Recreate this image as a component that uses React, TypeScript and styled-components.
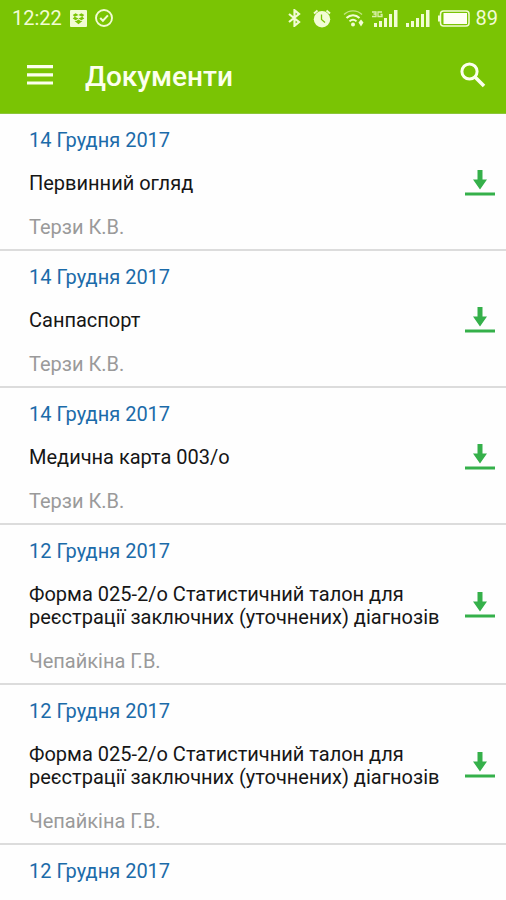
import React from "react";
import styled, { createGlobalStyle } from "styled-components";

const GlobalStyle = createGlobalStyle`
  *, *::before, *::after { box-sizing: border-box; }
  body {
    margin: 0;
    background: #fefefe;
    font-family: Roboto, "Noto Sans", sans-serif;
  }
`;

const Header = styled.header`
  background: #7ac404;
  color: #fcffee;
  border-bottom: 1px solid #8cc63a;
`;

const StatusBar = styled.div`
  display: flex;
  align-items: center;
  justify-content: space-between;
  height: 36px;
  padding: 0 8px 0 12px;
  color: #f2fcd4;
  font-size: 20px;
  line-height: 24px;
`;

const StatusGroup = styled.div<{ $gap: number }>`
  display: flex;
  align-items: center;
  gap: ${({ $gap }) => $gap}px;

  svg { display: block; flex: none; }
`;

const Toolbar = styled.div`
  display: flex;
  align-items: center;
  height: 77px;
  padding: 0 16px 0 22px;
`;

const IconButton = styled.button`
  display: flex;
  flex: none;
  padding: 4px;
  border: 0;
  background: none;
  color: inherit;
  cursor: pointer;
`;

const Title = styled.h1`
  flex: 1;
  margin: 0;
  padding: 4px 0 0 27px;
  font-size: 28px;
  font-weight: 500;
  line-height: 32px;
`;

const List = styled.ul`
  margin: 0;
  padding: 0;
  list-style: none;
`;

const Row = styled.li`
  display: flex;
  align-items: center;
  justify-content: space-between;
  padding: 14px 7px 10px 29px;
  border-bottom: 2px solid #dcdcdc;

  &:last-child { border-bottom: 0; }
`;

const Details = styled.div`
  display: flex;
  flex-direction: column;
  gap: 20px;
  max-width: 412px;
  font-size: 20px;
  line-height: 24px;
`;

const DateText = styled.time`
  color: #1b6ba9;
`;

const DocumentName = styled.span`
  color: #161616;
  line-height: 23px;
`;

const Author = styled.span`
  color: #9a9a9a;
`;

interface DocumentEntry {
  id: number;
  iso: string;
  date: string;
  name?: string;
  author?: string;
}

const formName =
  "Форма 025-2/о Статистичний талон для реєстрації заключних (уточнених) діагнозів";

const documents: DocumentEntry[] = [
  { id: 1, iso: "2017-12-14", date: "14 Грудня 2017", name: "Первинний огляд", author: "Терзи К.В." },
  { id: 2, iso: "2017-12-14", date: "14 Грудня 2017", name: "Санпаспорт", author: "Терзи К.В." },
  { id: 3, iso: "2017-12-14", date: "14 Грудня 2017", name: "Медична карта 003/о", author: "Терзи К.В." },
  { id: 4, iso: "2017-12-12", date: "12 Грудня 2017", name: formName, author: "Чепайкіна Г.В." },
  { id: 5, iso: "2017-12-12", date: "12 Грудня 2017", name: formName, author: "Чепайкіна Г.В." },
  { id: 6, iso: "2017-12-12", date: "12 Грудня 2017" },
];

const DropIcon = () => (
  <svg width="17" height="17" viewBox="0 0 17 17" aria-hidden="true">
    <rect width="17" height="17" rx="1" fill="currentColor" />
    <path
      d="M5.6 3.2 8.5 5l2.9-1.8 2.9 1.9-2 1.7 2 1.7-2.9 1.8-2.9-1.8-2.9 1.8-2.9-1.8 2-1.7-2-1.7z M8.5 5 4.8 6.8l3.7 1.8 3.7-1.8z"
      fill="#7ac404"
      fillRule="evenodd"
    />
    <path d="M4.6 11 8.5 14.2 12.4 11 10.8 11 8.5 9.6 6.2 11z" fill="#7ac404" />
  </svg>
);

const CheckIcon = () => (
  <svg width="18" height="18" viewBox="0 0 18 18" fill="none" stroke="currentColor" aria-hidden="true">
    <circle cx="9" cy="9" r="8" strokeWidth="1.9" />
    <path d="m5.2 9 2.7 2.8 5-5.4" strokeWidth="2" />
  </svg>
);

const BluetoothIcon = () => (
  <svg width="13" height="18" viewBox="0 0 13 18" fill="none" stroke="currentColor" strokeWidth="2.2" aria-hidden="true">
    <path d="m1 5 10 8-4.5 3.8V1.2L11 5 1 13" />
  </svg>
);

const AlarmIcon = () => (
  <svg width="18" height="19" viewBox="0 0 18 19" fill="none" aria-hidden="true">
    <circle cx="9" cy="10.2" r="8.2" fill="currentColor" />
    <path d="M1 4.5 4.5 1.6M17 4.5l-3.5-2.9" stroke="currentColor" strokeWidth="2" />
    <path d="M8.5 5.5v5l3.5 3" stroke="#7ac404" strokeWidth="1.3" />
  </svg>
);

const WifiIcon = () => (
  <svg width="21" height="18" viewBox="0 0 21 18" fill="none" stroke="currentColor" aria-hidden="true">
    <path d="M1 5.5c5-4.8 13-4.8 18 0" strokeWidth="1.4" opacity="0.6" />
    <path d="M3.5 9c3.8-3.8 9.2-3.8 13 0" strokeWidth="2" />
    <path d="M6.5 12.4c2.1-2 4.9-2 7 0" strokeWidth="2" />
    <circle cx="10" cy="15.4" r="2" fill="currentColor" stroke="none" />
    <path d="M18 10.5 20.5 13.5 18 17.5 15.5 13.5z" fill="currentColor" stroke="none" />
  </svg>
);

const SignalBars = () => (
  <path d="M0 14h3v4H0zM5 12h3v6H5zM10 9h3v9h-3zM15 5h3v13h-3zM20 1h3.5v17H20z" fill="currentColor" />
);

const NetworkIcon = () => (
  <svg width="26" height="18" viewBox="0 0 26 18" aria-hidden="true">
    <g transform="translate(2 0)">
      <SignalBars />
    </g>
    <path
      d="M0 3h4v2H1.5M4 5v2.5H0M10 3H6v4.5h4V5.5H8.5"
      fill="none"
      stroke="currentColor"
      strokeWidth="1.3"
      opacity="0.8"
    />
  </svg>
);

const SignalIcon = () => (
  <svg width="24" height="18" viewBox="0 0 24 18" aria-hidden="true">
    <SignalBars />
  </svg>
);

const BatteryIcon = () => (
  <svg width="32" height="17" viewBox="0 0 32 17" aria-hidden="true">
    <rect x="2.5" y="1" width="28.5" height="15" rx="3" fill="none" stroke="currentColor" strokeWidth="1.5" />
    <rect x="5.5" y="3" width="23.5" height="11" fill="#fffff4" />
    <path d="M0 5.5h2v6H0z" fill="currentColor" />
  </svg>
);

const MenuIcon = () => (
  <svg width="28" height="20" viewBox="0 0 28 20" aria-hidden="true">
    <path d="M1 0h26v3.2H1zM1 8.2h26v3.2H1zM1 16.4h26v3.2H1z" fill="currentColor" />
  </svg>
);

const SearchIcon = () => (
  <svg width="26" height="26" viewBox="0 0 26 26" fill="none" stroke="currentColor" aria-hidden="true">
    <circle cx="9.5" cy="9.5" r="7.6" strokeWidth="3" />
    <path d="m15 15 9 9" strokeWidth="3.6" />
  </svg>
);

const DownloadIcon = () => (
  <svg width="30" height="28" viewBox="0 0 30 28" fill="#35b04a" aria-hidden="true">
    <path d="M12.5 0h5v9.5H22L15 19.5 8 9.5h4.5z" />
    <path d="M0 22.5h30v3H0z" />
  </svg>
);

export default function App() {
  return (
    <>
      <GlobalStyle />
      <Header>
        <StatusBar>
          <StatusGroup $gap={8}>
            <span>12:22</span>
            <DropIcon />
            <CheckIcon />
          </StatusGroup>
          <StatusGroup $gap={8}>
            <StatusGroup $gap={12}>
              <BluetoothIcon />
              <AlarmIcon />
              <WifiIcon />
            </StatusGroup>
            <NetworkIcon />
            <SignalIcon />
            <StatusGroup $gap={6}>
              <BatteryIcon />
              <span>89</span>
            </StatusGroup>
          </StatusGroup>
        </StatusBar>
        <Toolbar>
          <IconButton type="button" aria-label="Меню">
            <MenuIcon />
          </IconButton>
          <Title>Документи</Title>
          <IconButton type="button" aria-label="Пошук">
            <SearchIcon />
          </IconButton>
        </Toolbar>
      </Header>
      <main>
        <List>
          {documents.map((doc) => (
            <Row key={doc.id}>
              <Details>
                <DateText dateTime={doc.iso}>{doc.date}</DateText>
                {doc.name && <DocumentName>{doc.name}</DocumentName>}
                {doc.author && <Author>{doc.author}</Author>}
              </Details>
              {doc.name && (
                <IconButton type="button" aria-label={`Завантажити: ${doc.name}`}>
                  <DownloadIcon />
                </IconButton>
              )}
            </Row>
          ))}
        </List>
      </main>
    </>
  );
}
